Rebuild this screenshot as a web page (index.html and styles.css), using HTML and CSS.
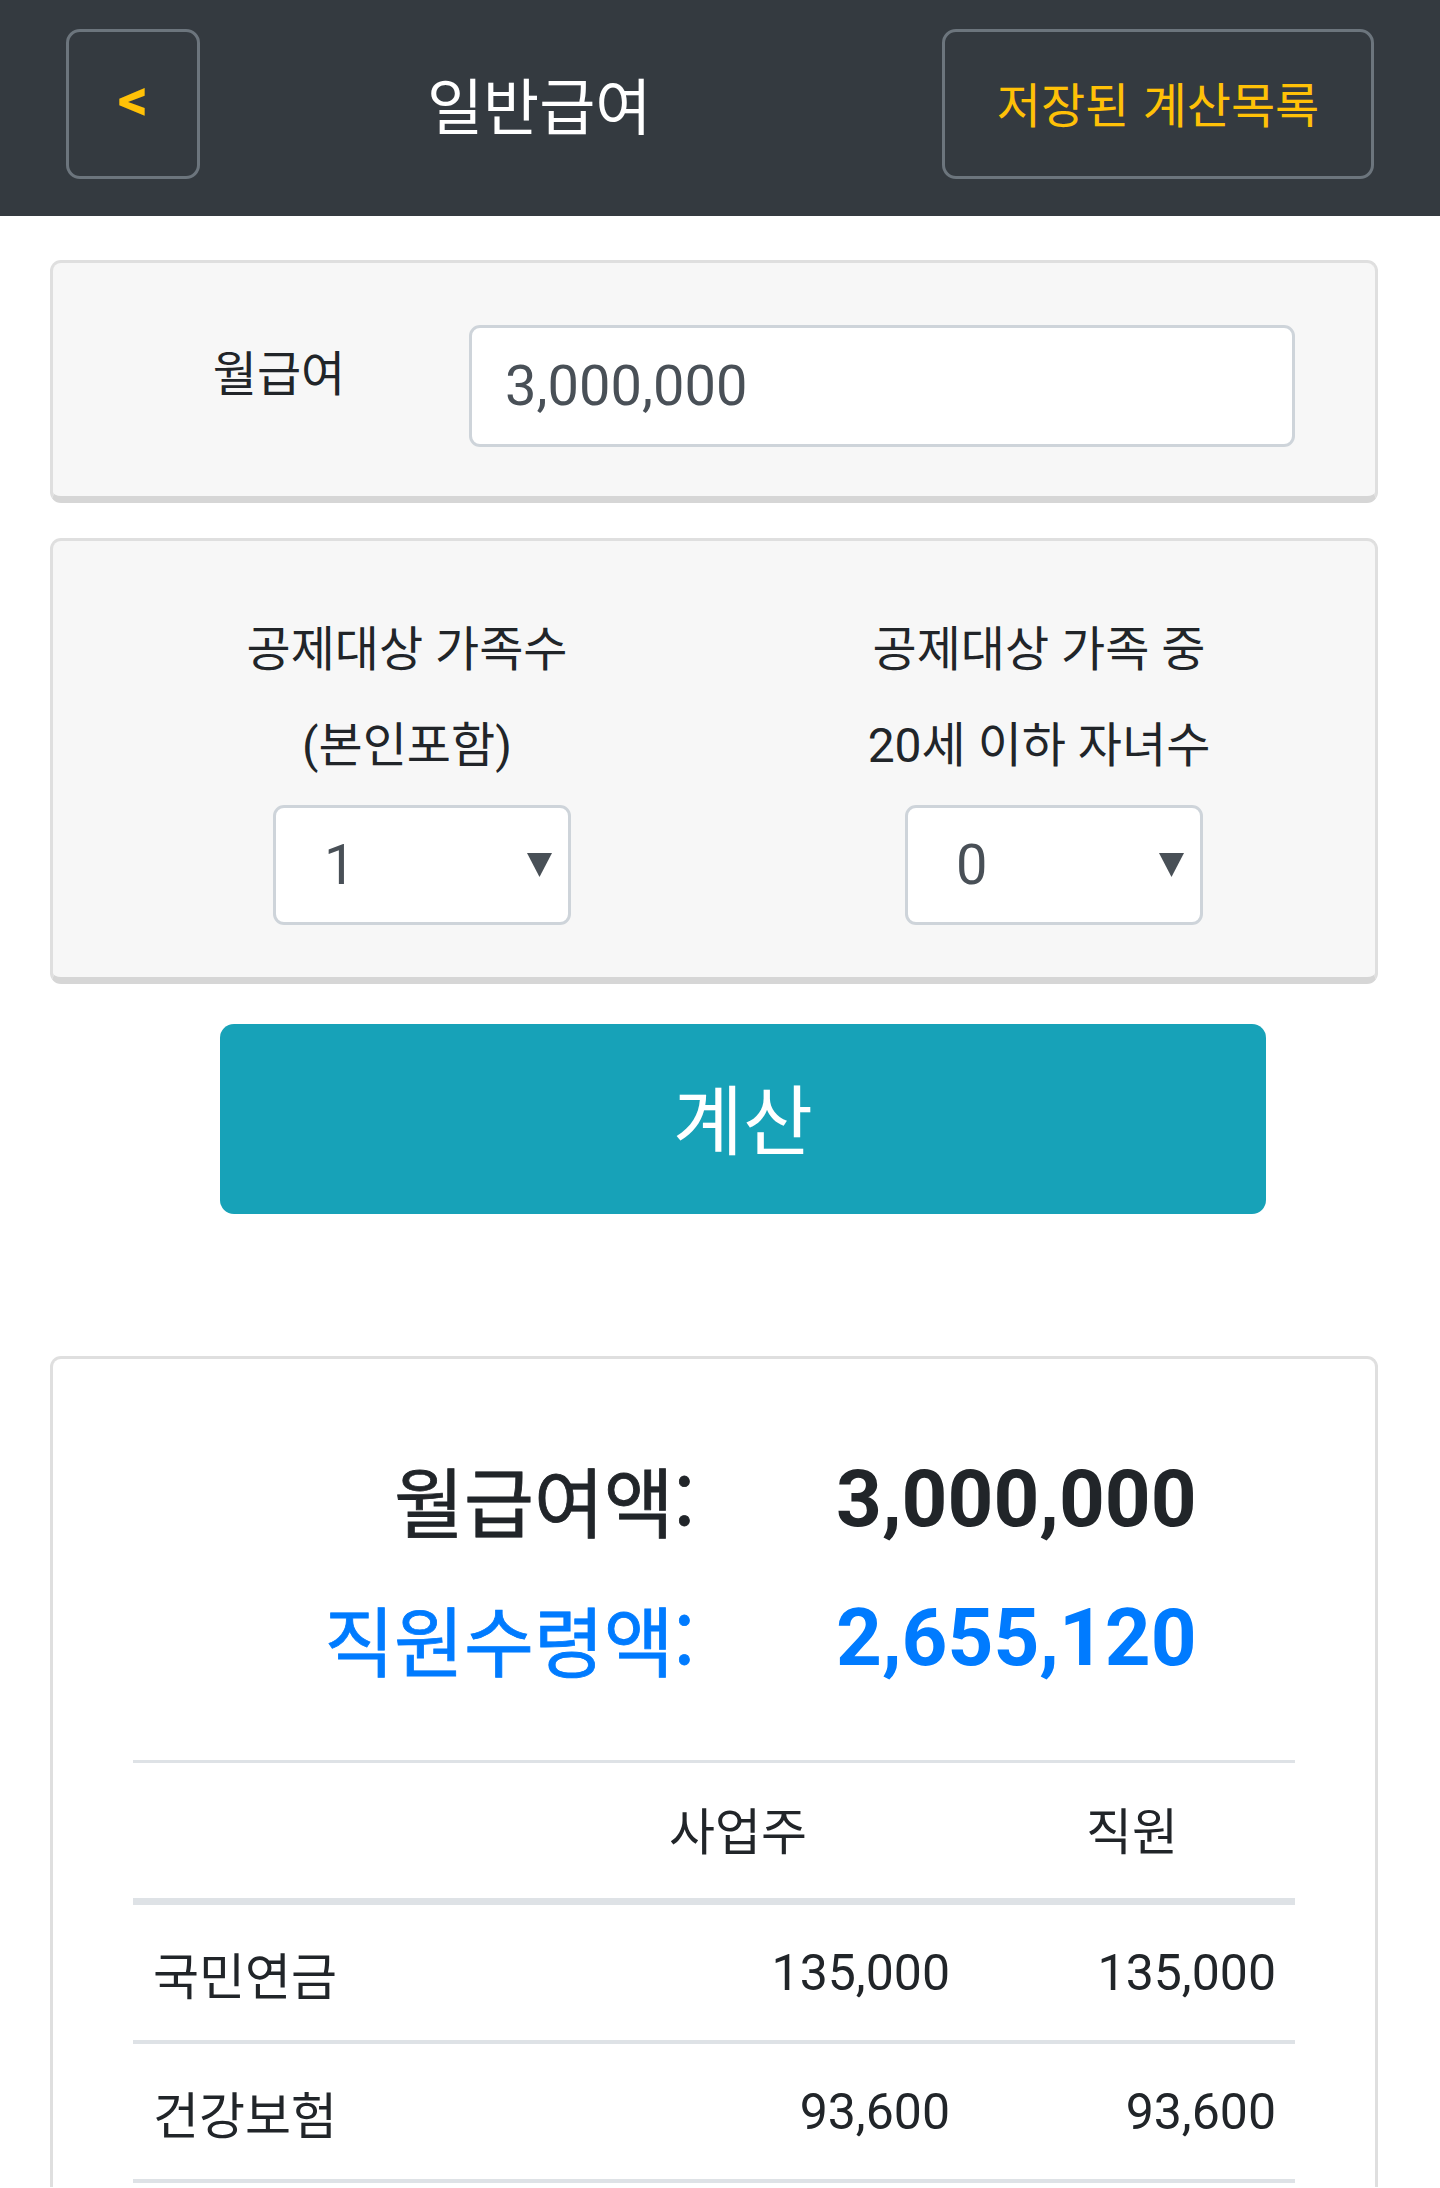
FILE: index.html
```html
<!DOCTYPE html>
<html lang="ko">
<head>
<meta charset="utf-8">
<title>일반급여</title>
<link rel="stylesheet" href="styles.css">
</head>
<body>
<header class="topbar">
  <button class="btn-back" type="button">&lt;</button>
  <h1 class="title">일반급여</h1>
  <button class="btn-saved" type="button">저장된 계산목록</button>
</header>

<main>
  <section class="card card-salary">
    <label class="salary-label" for="salary">월급여</label>
    <input class="salary-input" id="salary" type="text" value="3,000,000">
  </section>

  <section class="card card-family">
    <div class="family-col">
      <p class="family-label">공제대상 가족수<br>(본인포함)</p>
      <div class="select-wrap">
        <select class="select-box"><option>1</option></select>
        <svg class="select-arrow" viewBox="0 0 25 24" width="25" height="24"><polygon points="0,0 25,0 12.5,24" fill="#495057"/></svg>
      </div>
    </div>
    <div class="family-col">
      <p class="family-label">공제대상 가족 중<br>20세 이하 자녀수</p>
      <div class="select-wrap">
        <select class="select-box"><option>0</option></select>
        <svg class="select-arrow" viewBox="0 0 25 24" width="25" height="24"><polygon points="0,0 25,0 12.5,24" fill="#495057"/></svg>
      </div>
    </div>
  </section>

  <button class="btn-calc" type="button">계산</button>

  <section class="card card-result">
    <div class="summary">
      <div class="sum-label">월급여액:</div>
      <div class="sum-value">3,000,000</div>
      <div class="sum-label blue">직원수령액:</div>
      <div class="sum-value blue">2,655,120</div>
    </div>
    <div class="divider"></div>
    <table class="detail">
      <thead>
        <tr><th class="c1"></th><th class="c2">사업주</th><th class="c3">직원</th></tr>
      </thead>
      <tbody>
        <tr><td class="c1">국민연금</td><td class="c2">135,000</td><td class="c3">135,000</td></tr>
        <tr><td class="c1">건강보험</td><td class="c2">93,600</td><td class="c3">93,600</td></tr>
      </tbody>
    </table>
  </section>
</main>
</body>
</html>
```

FILE: styles.css
```css
* { box-sizing: border-box; }

html, body {
  margin: 0;
  padding: 0;
  background: #ffffff;
  font-family: Roboto, "Noto Sans CJK KR", sans-serif;
  color: #212529;
}

.topbar {
  height: 216px;
  background: #343a40;
  display: flex;
  align-items: flex-start;
  padding: 29px 66px 0 66px;
}

.btn-back {
  width: 134px;
  height: 150px;
  border: 3px solid #6c757d;
  border-radius: 14px;
  background: transparent;
  color: #ffc107;
  font-family: Roboto, "Noto Sans CJK KR", sans-serif;
  font-weight: 700;
  font-size: 60px;
  line-height: 1;
  padding: 0 0 8px 0;
  margin: 0;
}

.title {
  margin: 0 0 0 227px;
  font-weight: 400;
  font-size: 61px;
  line-height: 150px;
  color: #ffffff;
  font-family: "Noto Sans CJK KR", sans-serif;
}

.btn-saved {
  margin: 0 0 0 auto;
  width: 432px;
  height: 150px;
  border: 3px solid #6c757d;
  border-radius: 14px;
  background: transparent;
  color: #ffc107;
  font-family: "Noto Sans CJK KR", sans-serif;
  font-size: 48px;
  font-weight: 400;
  padding: 0 0 4px 0;
}

.card {
  margin: 0 62px 0 50px;
  border: 3px solid #dfdfdf;
  border-radius: 11px;
  background: #f7f7f7;
}

.card-salary {
  margin-top: 44px;
  border-bottom: 7px solid #d6d6d6;
  padding: 62px 0 49px 0;
  display: flex;
  align-items: center;
}

.salary-label {
  width: 416px;
  padding-left: 36px;
  text-align: center;
  font-family: "Noto Sans CJK KR", sans-serif;
  font-size: 48px;
  color: #212529;
  padding-bottom: 32px;
}

.salary-input {
  width: 826px;
  height: 122px;
  border: 3px solid #ced4da;
  border-radius: 11px;
  background: #ffffff;
  padding: 0 0 0 33px;
  font-family: Roboto, sans-serif;
  font-size: 56px;
  color: #495057;
  outline: none;
}

.card-family {
  margin-top: 35px;
  border-bottom: 7px solid #d6d6d6;
  padding: 61px 20px 52px 38px;
  display: grid;
  grid-template-columns: 632px 632px;
}

.family-col {
  display: flex;
  flex-direction: column;
  align-items: center;
}

.family-label {
  margin: 0;
  text-align: center;
  font-family: Roboto, "Noto Sans CJK KR", sans-serif;
  font-size: 48px;
  line-height: 96px;
  color: #212529;
}

.select-wrap {
  position: relative;
  margin: 11px 0 0 30px;
  width: 298px;
  height: 120px;
}

.select-box {
  -webkit-appearance: none;
  appearance: none;
  width: 100%;
  height: 100%;
  border: 3px solid #ced4da;
  border-radius: 11px;
  background: #ffffff;
  padding: 0 0 0 48px;
  font-family: Roboto, sans-serif;
  font-size: 56px;
  color: #495057;
  outline: none;
}

.select-arrow {
  position: absolute;
  left: 254px;
  top: 48px;
  pointer-events: none;
}

.btn-calc {
  display: block;
  margin: 40px 0 0 220px;
  width: 1046px;
  height: 190px;
  border: none;
  border-radius: 14px;
  background: #17a2b8;
  color: #ffffff;
  font-family: "Noto Sans CJK KR", sans-serif;
  font-size: 76px;
  font-weight: 400;
  padding: 0 0 6px 0;
}

.card-result {
  margin-top: 142px;
  background: #ffffff;
  border-bottom: none;
  border-radius: 11px 11px 0 0;
  padding: 71px 0 4px 0;
}

.summary {
  display: grid;
  grid-template-columns: 642px auto;
  column-gap: 141px;
  line-height: 139px;
}

.sum-label {
  text-align: right;
  font-family: "Noto Sans CJK KR", sans-serif;
  font-size: 76px;
  color: #212529;
  -webkit-text-stroke: 0.8px currentColor;
}

.sum-value {
  font-family: Roboto, sans-serif;
  font-weight: 700;
  font-size: 80px;
  color: #212529;
}

.blue { color: #007bff; }

.divider {
  margin: 52px 80px 0 80px;
  border-top: 3px solid #dee2e6;
}

.detail {
  margin: 0 80px;
  width: 1162px;
  border-collapse: separate;
  border-spacing: 0;
  table-layout: fixed;
  font-family: Roboto, "Noto Sans CJK KR", sans-serif;
  font-size: 50px;
  color: #212529;
}

.detail .c1 { width: 374px; }
.detail .c2 { width: 462px; }
.detail .c3 { width: 326px; }

.detail th {
  height: 142px;
  font-weight: 400;
  text-align: center;
  border-bottom: 7px solid #dee2e6;
  padding: 0 0 6px 0;
}

.detail td {
  height: 139px;
  border-bottom: 4px solid #dee2e6;
  padding: 0 19px 0 0;
  text-align: right;
}

.detail td.c1 {
  text-align: left;
  padding: 0 0 0 20px;
}
```
